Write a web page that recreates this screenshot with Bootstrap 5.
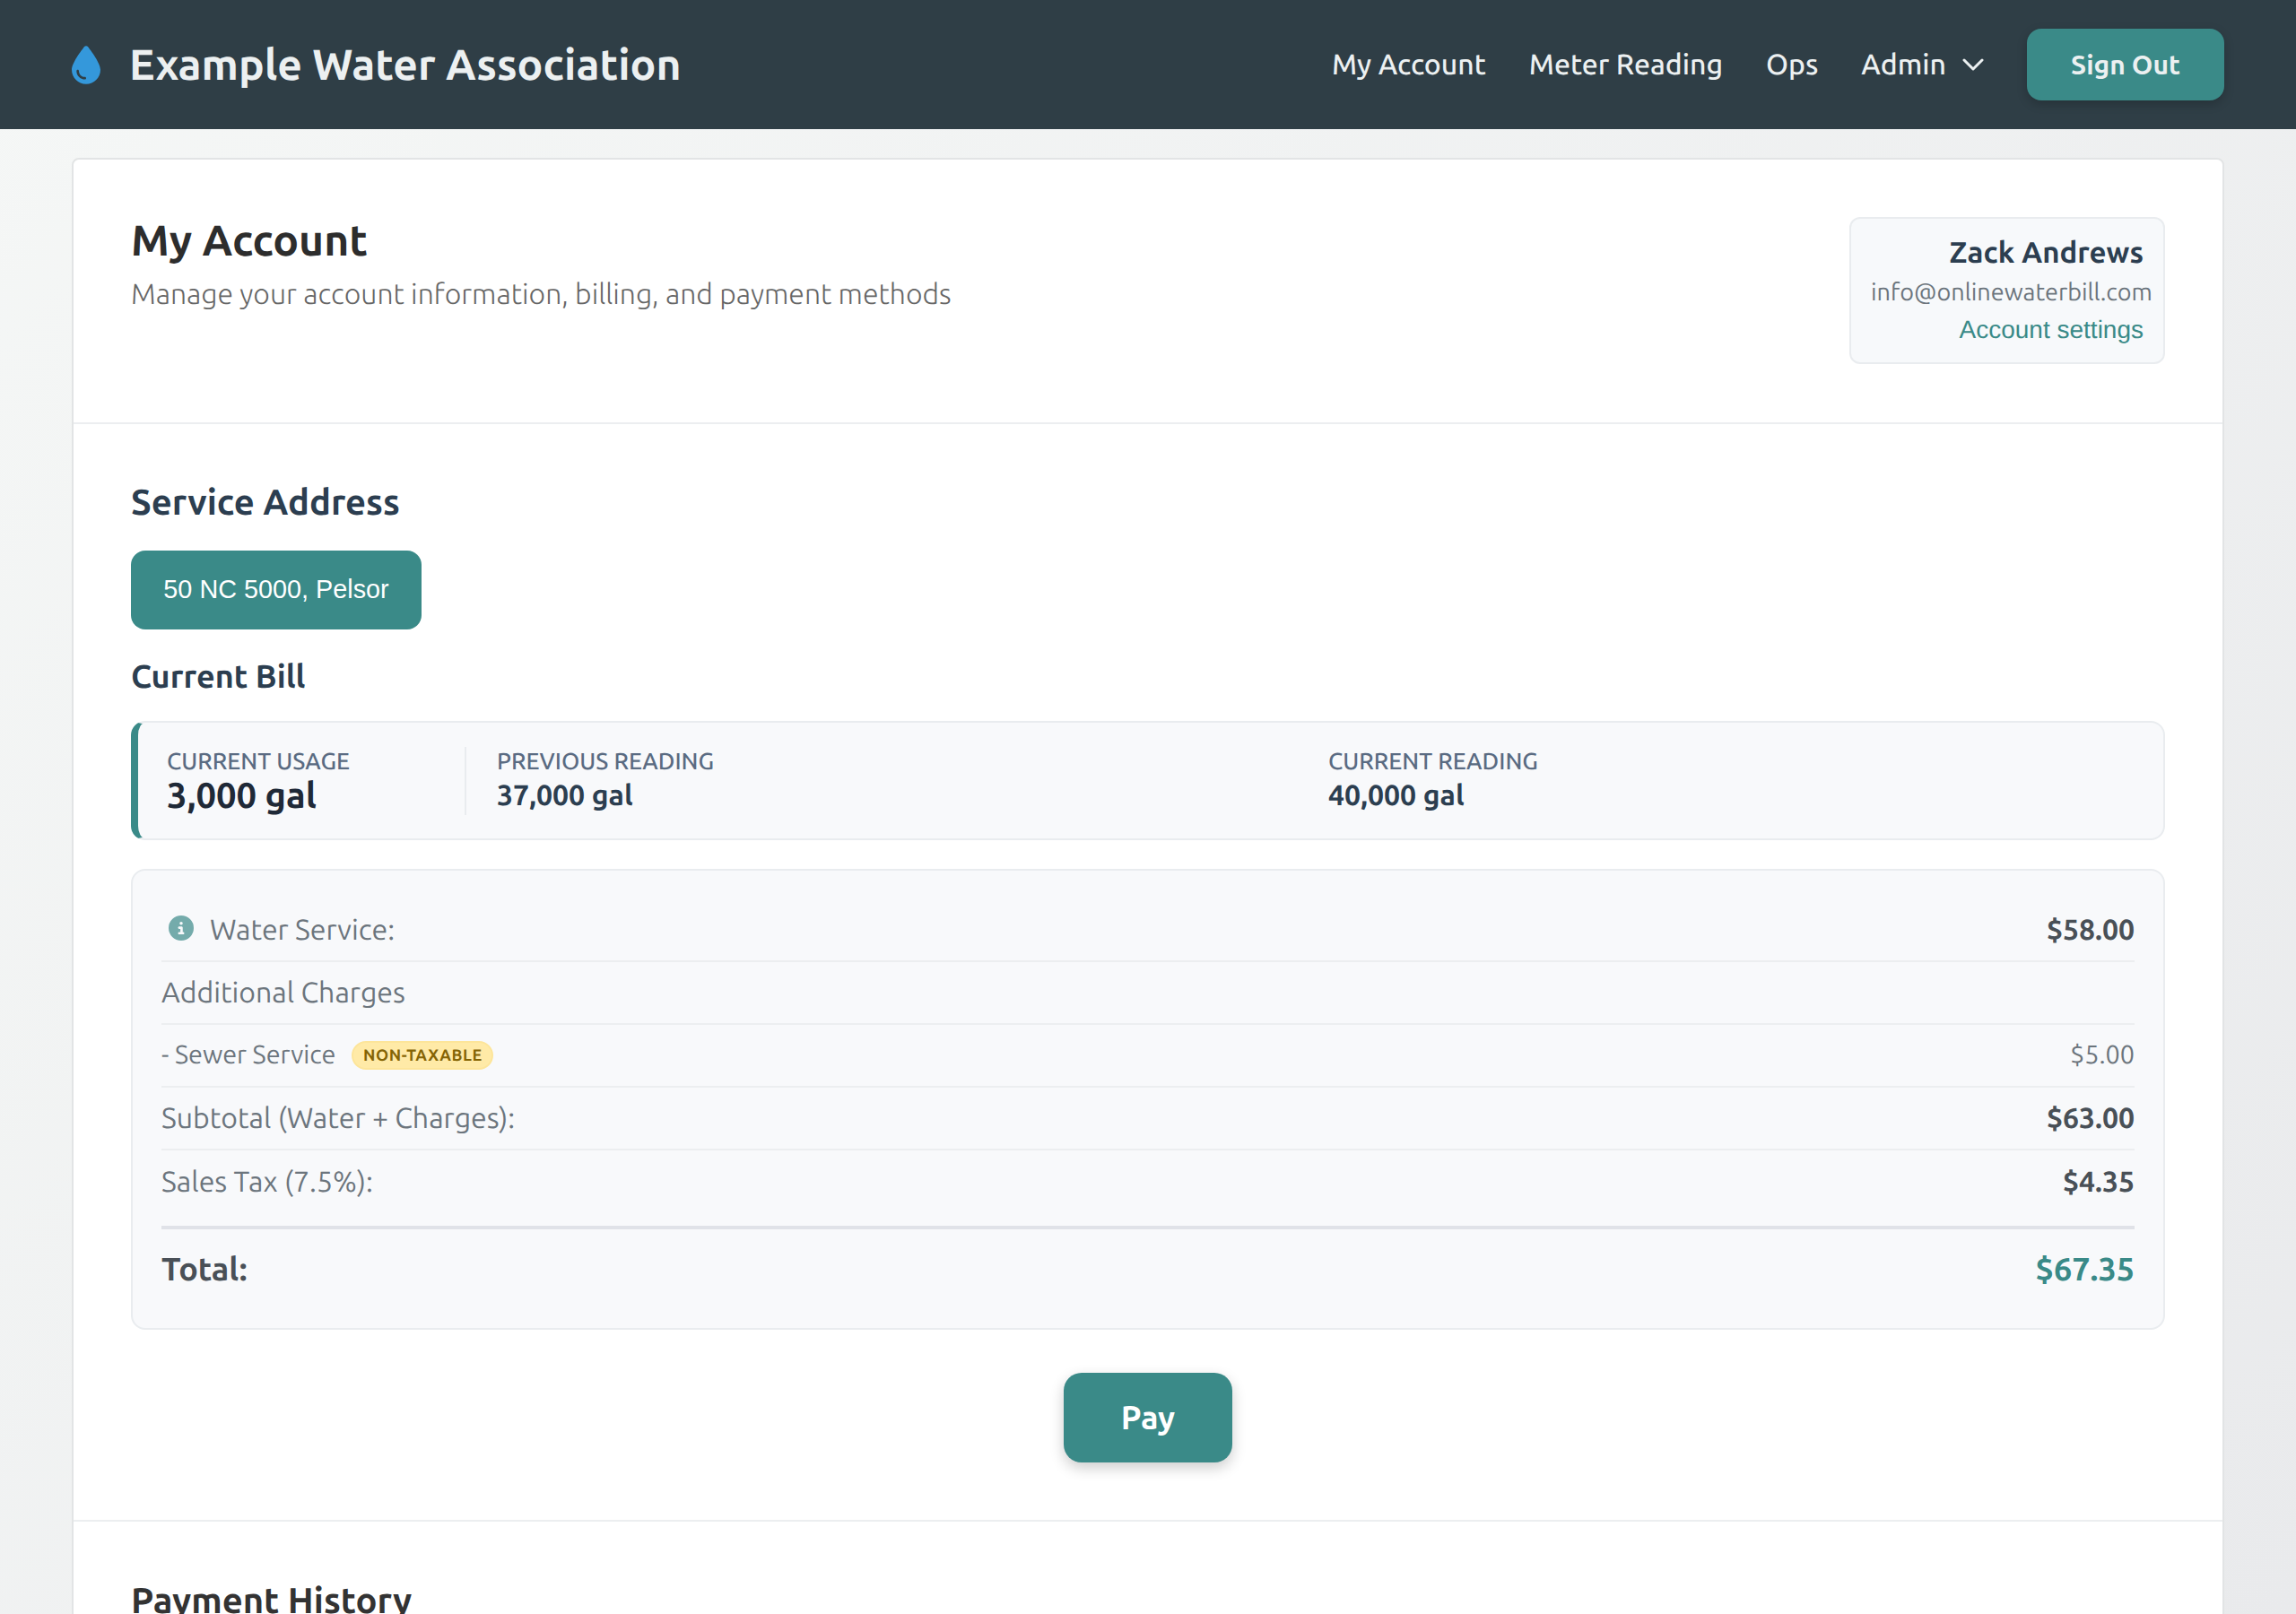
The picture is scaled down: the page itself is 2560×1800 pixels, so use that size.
<!DOCTYPE html>
<html lang="en">
<head>
<meta charset="utf-8">
<title>My Account</title>
<link href="https://cdn.jsdelivr.net/npm/bootstrap@5.3.0/dist/css/bootstrap.min.css" rel="stylesheet">
<style>
html,body{height:1800px;overflow:hidden}
body{font-family:Ubuntu,"Noto Sans",sans-serif;background:linear-gradient(135deg,#f5f7f6 0%,#e9eaec 100%);color:#333;font-size:32px;text-rendering:geometricPrecision}
.wb-top{background:#2f3e46;height:144px;padding:0 80px}
.wb-brand{color:#ecf0f1;font-size:48px;font-weight:600;gap:32px;padding:0;margin:0}
.wb-brand:hover{color:#ecf0f1}
.wb-nav{gap:48px}
.wb-nav .nav-link{color:#ecf0f1;font-size:32px;font-weight:500;padding:0;display:flex;align-items:center;gap:18px}
.wb-signout{background:#3a8a88;color:#ecf0f1;font-size:30px;font-weight:600;border:0;border-radius:16px;width:220px;height:80px;margin-left:48px;box-shadow:0 4px 12px rgba(0,0,0,.2)}
.wb-shell{margin:32px 80px 0;background:#fff;border:2px solid #e2e4e5;border-radius:8px;box-shadow:none}
.wb-sec{padding:64px;border-bottom:2px solid #eceef0}
.wb-hero{height:295px}
.wb-title{font-size:48px;font-weight:600;color:#2d2d2d;margin:-2px 0 6px}
.wb-sub{font-size:32px;font-weight:300;color:#666;margin:0}
.wb-user{width:352px;height:164px;background:#f7f9fb;border:2px solid #e9ecef;border-radius:12px;padding:14px 22px;text-align:right;white-space:nowrap}
.wb-uname{font-size:33px;font-weight:600;color:#2c3e50;line-height:48px}
.wb-umail{font-size:27px;color:#6c757d;line-height:40px}
.wb-ulink{font-family:"Liberation Sans",sans-serif;font-size:28px;color:#3a8a88;text-decoration:none;line-height:44px;display:block}
.wb-h3{font-size:40px;font-weight:600;color:#2c3e50;margin:0 0 31px;line-height:46px}
.wb-addr{font-family:"Liberation Sans",sans-serif;background:#3a8a88;color:#fff;font-size:28.8px;border:0;border-radius:16px;width:324px;height:88px;padding:0;display:block}
.wb-h4{font-size:36px;font-weight:600;color:#2c3e50;margin:32px 0 30px;line-height:40px}
.wb-usage{background:#f8f9fb;border:2px solid #e9ecef;border-left:8px solid #3a8a88;border-radius:16px;height:133px}
.wb-ucol{width:366px;border-right:2px solid #e9ecef;height:76px;padding-left:32px}
.wb-rcol{width:927px;padding-left:34px}
.wb-lab{font-size:26px;font-weight:500;color:#5a6b82;line-height:32px;text-transform:uppercase}
.wb-big{font-size:40px;font-weight:600;color:#1f2937;line-height:44px}
.wb-val{font-size:32px;font-weight:600;color:#2c3e50;line-height:44px}
.wb-break{background:#f8f9fb;border:2px solid #e9ecef;border-radius:16px;margin-top:32px;padding:32px;height:514px}
.wb-row{height:70px;border-bottom:2px solid #eceef0;color:#6c757d;font-size:32px}
.wb-row b{font-weight:600;color:#495057}
.wb-row.wb-small{font-size:28.8px}
.wb-row.wb-small b{color:#6c757d;font-weight:400}
.wb-row.wb-last{border:0;height:84px;padding-bottom:14px}
.wb-row.wb-total{border:0;border-top:4px solid #e0e2e8;height:92px;font-size:36px;font-weight:600;color:#495057}
.wb-row.wb-total b{color:#3a8a88;font-size:36px}
.wb-info{width:28px;height:28px;margin:-4px 18px 0 8px;fill:#74abab}
.wb-tag{background:#ffeaa7;border:2px solid #fde59a;border-radius:32px;color:#856404;font-size:18px;font-weight:600;letter-spacing:.6px;height:32px;width:158px;margin-left:18px}
.wb-pay{background:#3a8a88;color:#fff;font-size:36px;font-weight:600;border:0;border-radius:20px;width:188px;height:100px;box-shadow:0 6px 16px rgba(0,0,0,.2)}
.wb-paywrap{margin-top:48px;text-align:center}
.wb-sec2{padding:64px}
.wb-hist{font-size:40px;font-weight:600;color:#333;margin:0;line-height:48px}
</style>
</head>
<body>
<nav class="navbar wb-top d-flex justify-content-between align-items-center">
  <a class="navbar-brand wb-brand d-flex align-items-center" href="#">
    <svg width="32" height="43" viewBox="0 0 384 512" fill="#3498db" aria-hidden="true"><path d="M192 512C86 512 0 426 0 320C0 228.8 130.2 57.7 166.6 11.7C172.6 4.2 181.5 0 191.1 0h1.8c9.6 0 18.5 4.2 24.5 11.7C253.8 57.7 384 228.8 384 320c0 106-86 192-192 192zM96 336c0-8.8-7.2-16-16-16s-16 7.2-16 16c0 61.9 50.1 112 112 112c8.8 0 16-7.2 16-16s-7.2-16-16-16c-44.2 0-80-35.8-80-80z"/></svg>
    <span>Example Water Association</span>
  </a>
  <div class="d-flex align-items-center">
    <ul class="nav wb-nav align-items-center">
      <li class="nav-item"><a class="nav-link" href="#">My Account</a></li>
      <li class="nav-item"><a class="nav-link" href="#">Meter Reading</a></li>
      <li class="nav-item"><a class="nav-link" href="#">Ops</a></li>
      <li class="nav-item"><a class="nav-link" href="#">Admin
        <svg width="24" height="14" viewBox="0 0 24 14" fill="none" stroke="#ecf0f1" stroke-width="3" stroke-linecap="round" stroke-linejoin="round" aria-hidden="true"><path d="M2 2l10 10L22 2"/></svg></a></li>
    </ul>
    <button class="btn wb-signout" type="button">Sign Out</button>
  </div>
</nav>
<main class="card wb-shell">
  <section class="wb-sec wb-hero d-flex justify-content-between align-items-start">
    <div>
      <h1 class="wb-title">My Account</h1>
      <p class="wb-sub">Manage your account information, billing, and payment methods</p>
    </div>
    <div class="wb-user">
      <div class="wb-uname">Zack Andrews</div>
      <div class="wb-umail">info@onlinewaterbill.com</div>
      <a class="wb-ulink" href="#">Account settings</a>
    </div>
  </section>
  <section class="wb-sec">
    <h2 class="wb-h3">Service Address</h2>
    <button class="btn wb-addr" type="button">50 NC 5000, Pelsor</button>
    <h3 class="wb-h4">Current Bill</h3>
    <div class="wb-usage d-flex align-items-center">
      <div class="wb-ucol">
        <div class="wb-lab">Current Usage</div>
        <div class="wb-big">3,000 gal</div>
      </div>
      <div class="wb-rcol">
        <div class="wb-lab">Previous Reading</div>
        <div class="wb-val">37,000 gal</div>
      </div>
      <div class="wb-rcol">
        <div class="wb-lab">Current Reading</div>
        <div class="wb-val">40,000 gal</div>
      </div>
    </div>
    <div class="wb-break">
      <div class="wb-row d-flex justify-content-between align-items-center">
        <span class="d-flex align-items-center"><svg class="wb-info" viewBox="0 0 512 512" aria-hidden="true"><path d="M256 512A256 256 0 1 0 256 0a256 256 0 1 0 0 512zM216 336h24V272H216c-13.3 0-24-10.7-24-24s10.7-24 24-24h48c13.3 0 24 10.7 24 24v88h8c13.3 0 24 10.7 24 24s-10.7 24-24 24H216c-13.3 0-24-10.7-24-24s10.7-24 24-24zm40-208a32 32 0 1 1 0 64 32 32 0 1 1 0-64z"/></svg>Water Service:</span><b>$58.00</b>
      </div>
      <div class="wb-row d-flex align-items-center">Additional Charges</div>
      <div class="wb-row wb-small d-flex justify-content-between align-items-center">
        <span class="d-flex align-items-center">- Sewer Service<span class="wb-tag d-inline-flex align-items-center justify-content-center">NON-TAXABLE</span></span><b>$5.00</b>
      </div>
      <div class="wb-row d-flex justify-content-between align-items-center"><span>Subtotal (Water + Charges):</span><b>$63.00</b></div>
      <div class="wb-row wb-last d-flex justify-content-between align-items-center"><span>Sales Tax (7.5%):</span><b>$4.35</b></div>
      <div class="wb-row wb-total d-flex justify-content-between align-items-center"><span>Total:</span><b>$67.35</b></div>
    </div>
    <div class="wb-paywrap"><button class="btn wb-pay" type="button">Pay</button></div>
  </section>
  <section class="wb-sec2">
    <h2 class="wb-hist">Payment History</h2>
  </section>
</main>
<script src="https://cdn.jsdelivr.net/npm/bootstrap@5.3.0/dist/js/bootstrap.bundle.min.js"></script>
</body>
</html>
